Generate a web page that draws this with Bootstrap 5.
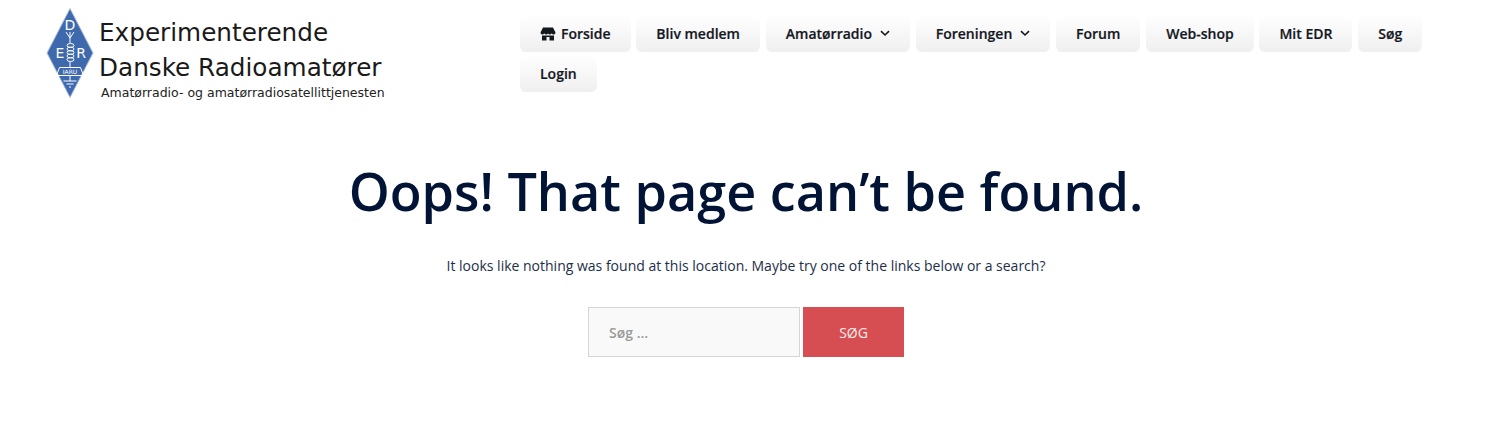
<!DOCTYPE html>
<html lang="en">
<head>
  <meta charset="UTF-8" />
  <title>Oops! That page can't be found</title>
  <link href="https://cdn.jsdelivr.net/npm/bootstrap@5.3.2/dist/css/bootstrap.min.css" rel="stylesheet" />
  <style>
    body {
      font-family: "Open Sans", sans-serif;
      background-color: #ffffff;
      color: #1c2e4a;
    }

    /* HEADER */
    .site-head {
      height: 120px;
      padding-left: 46px;
    }

    .logo-box {
      width: 474px;
      padding-top: 8px;
    }

    .logo-name {
      font-family: "DejaVu Sans", sans-serif;
      font-size: 24.7px;
      line-height: 35px;
      color: #1a1a1a;
      padding: 7px 0 0 1px;
    }

    .logo-sub {
      font-family: "DejaVu Sans", sans-serif;
      font-size: 12.5px;
      line-height: 14px;
      color: #222;
      padding-left: 3px;
      margin-top: 1px;
    }

    /* MENU */
    .menu-wrap {
      width: 910px;
      padding-top: 15px;
      column-gap: 5.8px;
      row-gap: 3px;
    }

    .menu-btn {
      height: 37px;
      padding: 0 20px;
      font-size: 14px;
      font-weight: 600;
      color: #14181f;
      text-decoration: none;
      border-radius: 6px;
      background: linear-gradient(#ffffff, #efeff0);
      -webkit-text-stroke: 0.2px #14181f;
    }

    .menu-btn svg {
      flex: none;
    }

    .home-link {
      gap: 5px;
    }

    .sub-link {
      gap: 8px;
    }

    /* 404 CONTENT */
    .oops-wrap {
      padding-right: 7px;
    }

    .oops-title {
      font-size: 52.2px;
      font-weight: 600;
      line-height: 76px;
      color: #021436;
      margin: 33px 0 0;
    }

    .oops-text {
      font-size: 14px;
      line-height: 22px;
      margin: 26px 0 0;
    }

    .search-row {
      margin-top: 30px;
      gap: 3px;
    }

    .search-input {
      width: 212px;
      height: 50px;
      padding: 0 20px;
      font-size: 14px;
      font-weight: 600;
      background-color: #f9f9f9;
      border: 1px solid #d6d6d6;
      border-radius: 0;
    }

    .search-input::placeholder {
      color: #9a9a9a;
      opacity: 1;
    }

    .search-btn {
      width: 101px;
      height: 50px;
      font-size: 14px;
      color: #fbeeee;
      background-color: #d64e51;
      border: 0;
      border-radius: 0;
    }
  </style>
</head>
<body>

  <!-- header with logo and menu -->
  <header class="site-head d-flex">
    <a href="#" class="logo-box d-flex text-decoration-none">
      <svg width="48" height="90" viewBox="0 0 48 90" class="flex-shrink-0" role="img" aria-label="EDR">
        <polygon points="24,0.5 47,45 24,89.5 1,45" fill="#3f69ad" stroke="#a9bcd9" stroke-width="1" />
        <g fill="none" stroke="#ffffff" stroke-width="1">
          <path d="M20 24 L24 30 L28 24 M24 24 V35" />
          <ellipse cx="24.5" cy="37.5" rx="3.5" ry="2" />
          <ellipse cx="24.5" cy="41" rx="3.5" ry="2" />
          <ellipse cx="24.5" cy="44.5" rx="3.5" ry="2" />
          <ellipse cx="24.5" cy="48" rx="3.5" ry="2" />
          <ellipse cx="24.5" cy="51.5" rx="3.5" ry="2" />
          <path d="M24 53.5 V59 M24 68 V73 M17.5 73 H30.5 M20.5 76 H27.5 M23 79 H25" />
          <path d="M13.5 59.5 H34.5 L37.5 67.5 H10.5 Z" />
        </g>
        <text x="24" y="22" text-anchor="middle" fill="#fff" font-family="DejaVu Sans, sans-serif" font-size="14">D</text>
        <text x="14" y="50" text-anchor="middle" fill="#fff" font-family="DejaVu Sans, sans-serif" font-size="14">E</text>
        <text x="35" y="50" text-anchor="middle" fill="#fff" font-family="DejaVu Sans, sans-serif" font-size="14">R</text>
        <text x="24" y="66" text-anchor="middle" fill="#fff" font-family="DejaVu Sans, sans-serif" font-size="6">IARU</text>
      </svg>
      <div class="ms-1">
        <div class="logo-name">Experimenterende<br />Danske Radioamatører</div>
        <div class="logo-sub">Amatørradio- og amatørradiosatellittjenesten</div>
      </div>
    </a>

    <nav class="menu-wrap d-flex flex-wrap align-content-start">
      <a href="#" class="menu-btn home-link d-flex align-items-center">
        <svg width="16" height="14" viewBox="0 0 16 14" aria-hidden="true">
          <path fill="#14181f" d="M3 0.5 H13 L15.5 5.5 Q15.5 7.5 13.7 7.5 Q12.2 7.5 11.7 6.4 Q11 7.5 9.8 7.5 Q8.6 7.5 8 6.4 Q7.4 7.5 6.2 7.5 Q5 7.5 4.3 6.4 Q3.8 7.5 2.3 7.5 Q0.5 7.5 0.5 5.5 Z M2 8.6 H14 V13.5 H9.5 V10 H6.5 V13.5 H2 Z" />
        </svg>
        Forside
      </a>
      <a href="#" class="menu-btn d-flex align-items-center">Bliv medlem</a>
      <a href="#" class="menu-btn sub-link d-flex align-items-center">
        Amatørradio
        <svg width="10" height="7" viewBox="0 0 10 7" aria-hidden="true"><path d="M1 1.2 L5 5 L9 1.2" fill="none" stroke="#14181f" stroke-width="1.6" /></svg>
      </a>
      <a href="#" class="menu-btn sub-link d-flex align-items-center">
        Foreningen
        <svg width="10" height="7" viewBox="0 0 10 7" aria-hidden="true"><path d="M1 1.2 L5 5 L9 1.2" fill="none" stroke="#14181f" stroke-width="1.6" /></svg>
      </a>
      <a href="#" class="menu-btn d-flex align-items-center">Forum</a>
      <a href="#" class="menu-btn d-flex align-items-center">Web-shop</a>
      <a href="#" class="menu-btn d-flex align-items-center">Mit EDR</a>
      <a href="#" class="menu-btn d-flex align-items-center">Søg</a>
      <a href="#" class="menu-btn d-flex align-items-center">Login</a>
    </nav>
  </header>

  <!-- main content -->
  <main class="oops-wrap text-center">
    <h1 class="oops-title">Oops! That page can’t be found.</h1>
    <p class="oops-text">It looks like nothing was found at this location. Maybe try one of the links below or a search?</p>
    <form class="search-row d-flex justify-content-center">
      <input type="search" class="search-input form-control flex-grow-0" placeholder="Søg …" />
      <button type="button" class="search-btn btn">SØG</button>
    </form>
  </main>

  <script src="https://cdn.jsdelivr.net/npm/bootstrap@5.3.2/dist/js/bootstrap.bundle.min.js"></script>
</body>
</html>
